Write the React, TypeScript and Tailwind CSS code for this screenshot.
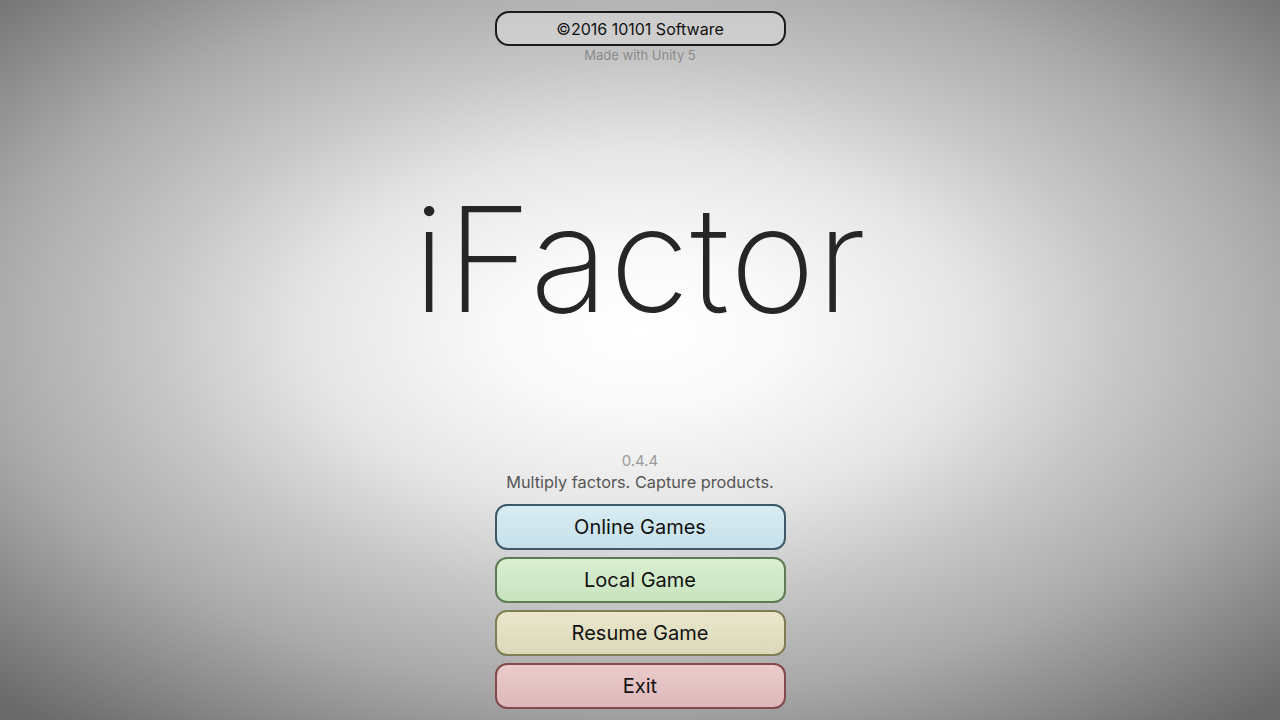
import React from "react";

const buttons = [
  { label: "Online Games", cls: "border-[#3d5866] bg-[linear-gradient(#d8ecf3,#c6e0ea)]" },
  { label: "Local Game", cls: "border-[#5f7a55] bg-[linear-gradient(#d9efd1,#c8e3bf)]" },
  { label: "Resume Game", cls: "border-[#7f7d55] bg-[linear-gradient(#e9e6cb,#dcd8b9)]" },
  { label: "Exit", cls: "border-[#824a4c] bg-[linear-gradient(#ebcbcc,#ddb8b9)]" },
];

export default function App() {
  return (
    <div
      className="w-[1280px] h-[720px] overflow-hidden flex flex-col items-center bg-[radial-gradient(ellipse_650px_360px_at_50%_46%,#ffffff_0%,#f9f9f9_22%,#e6e6e6_50%,#c6c6c6_75%,#aaaaaa_100%,#6a6a6a_142%)]"
      style={{ fontFamily: "Inter, 'Liberation Sans', sans-serif" }}
    >
      <div className="mt-[11px] w-[291px] h-[35px] rounded-[14px] border-2 border-[#1a1a1a] bg-[#d8d8d8]/60 flex items-center justify-center text-[16px] text-[#111]">
        ©2016 10101 Software
      </div>
      <div className="text-[13px] text-[#8a8a8a] leading-[18px]">Made with Unity 5</div>

      <div className="mt-[120px] h-[150px] flex items-center text-[#262626] text-[146px] font-[170] leading-none tracking-[1px]">
        iFactor
      </div>

      <div className="mt-[117px] text-[15px] text-[#9a9a9a] leading-[20px]">0.4.4</div>
      <div className="text-[16.3px] text-[#555] leading-[22px]">Multiply factors. Capture products.</div>

      <div className="mt-[11px] flex flex-col gap-[7px]">
        {buttons.map((b) => (
          <div
            key={b.label}
            className={`w-[291px] h-[46px] rounded-[12px] border-2 flex items-center justify-center text-[20px] text-[#111] ${b.cls}`}
          >
            {b.label}
          </div>
        ))}
      </div>
    </div>
  );
}
